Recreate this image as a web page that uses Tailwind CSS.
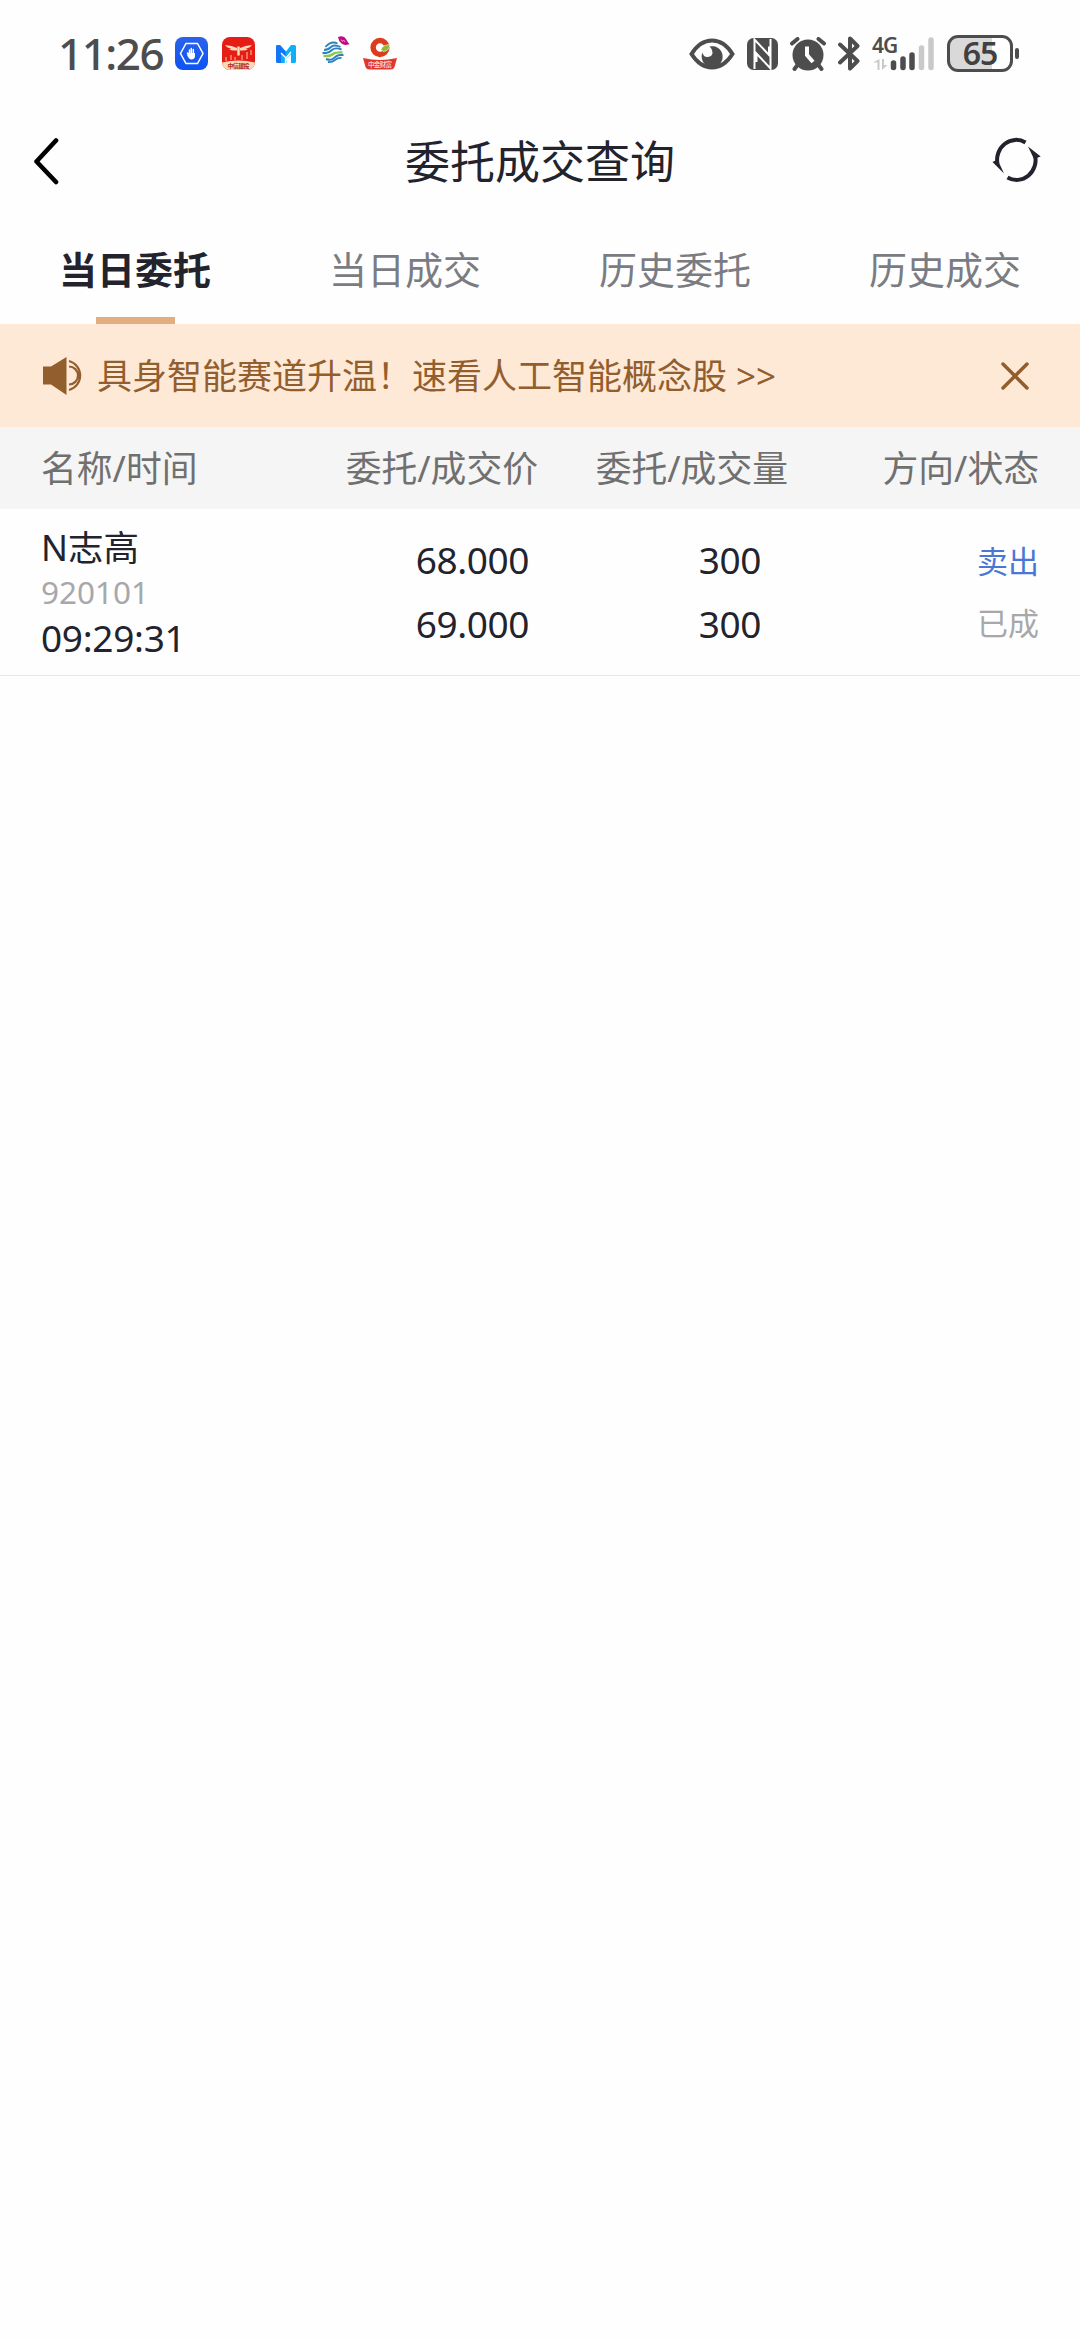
<!DOCTYPE html>
<html lang="zh-CN">
<head>
<meta charset="utf-8">
<title>委托成交查询</title>
<script src="https://cdn.jsdelivr.net/npm/@tailwindcss/browser@4"></script>
</head>
<body class="w-[1080px] h-[2340px] overflow-hidden bg-[#fefefe] font-['Noto_Sans','Noto_Sans_CJK_SC',sans-serif] text-[#22232d]">
  <!-- status bar -->
  <div class="h-[108px] flex items-start pl-[58px] pt-[35px] text-[#4d4d4d]">
    <div class="w-[117px] h-[36px] leading-[37px] text-[44px] font-medium tracking-[-1.5px] whitespace-nowrap">11:26</div>
    <svg class="w-[33px] h-[33px] mt-[2px]" viewBox="0 0 33 33">
      <defs><linearGradient id="b" x1="0" y1="0" x2="0" y2="1"><stop offset="0" stop-color="#2a62ea"/><stop offset="1" stop-color="#0d54f4"/></linearGradient></defs>
      <rect width="33" height="33" rx="8" fill="url(#b)"/>
      <path d="M11 6.500h11.500l5.500 10-5.500 10H11l-5.500-10z" fill="none" stroke="#fff" stroke-width="1.500"/>
      <path d="M12.500 16l2 2.500V13M16.300 16v-4.500M18.300 16v-3.500" stroke="#fff" stroke-width="1.500" stroke-linecap="round" fill="none"/>
      <path d="M13.500 16h6.500v4q-1 2.500-3.500 2.500T12 18z" fill="#fff"/>
    </svg>
    <svg class="w-[33px] h-[33px] mt-[2px] ml-[14px]" viewBox="0 0 33 33">
      <defs><clipPath id="rc"><rect width="33" height="33" rx="8"/></clipPath></defs>
      <g clip-path="url(#rc)"><rect width="33" height="33" fill="#e61c17"/>
      <path d="M0 25.500Q16 21.500 33 25.500V33H0z" fill="#fbd9b2"/>
      <path d="M4 20v4M9 18v5M13 20v3M20 18v5M25 15v7M29 13v5" stroke="#f1745a" stroke-width="2"/>
      <path d="M3 8q7 .5 12 3v2.500q-6 .5-8-1.500l2.500-.5Q5 11 3 8zM30 8q-7 .5-12 3v2.500q6 .5 8-1.500l-2.500-.5Q28 11 30 8z" fill="#fbdcb8"/>
      <path d="M16.500 9.500v9" stroke="#fbdcb8" stroke-width="2.500"/></g>
      <text x="16.500" y="31" font-size="6" font-weight="700" text-anchor="middle" textLength="22" fill="#b0271d" font-family="Noto Sans CJK SC">中信建投</text>
    </svg>
    <svg class="w-[20px] h-[18px] mt-[10px] ml-[21px]" viewBox="0 0 20 18">
      <path d="M0 1.500Q0 0 1.500 0H4l6 6.500L15 0h3.500Q20 0 20 1.500v15Q20 18 18.500 18H15V9l-5 5 .5 4H5V9z" fill="#0bb1f8"/>
      <path d="M0 1.500Q0 0 1.500 0H4l6 7-1 4-4-3v10H1.500Q0 18 0 16.500z" fill="#1476f5"/>
      <path d="M5 8l5 5 5-6M9.500 12v6" stroke="#fff" stroke-width="1.300" fill="none"/>
    </svg>
    <svg class="w-[28px] h-[29px] mt-[1px] ml-[26px]" viewBox="0 0 28 29" fill="none" stroke-width="1.900">
      <path d="M2 14Q6 14 9 11T18.500 11M3.500 11Q9 4.500 15.500 7.500" stroke="#2b83bd"/>
      <path d="M.5 17H4Q7 17 10 14T19.500 13.500M21.500 19H18Q15 19 12 22T4 23" stroke="#2b83bd"/>
      <path d="M1.500 20H5.500Q8.500 20 11 18T20.500 16.500" stroke="#8fc64a" stroke-width="2.400"/>
      <path d="M6 26Q10 26.500 13 24T19.500 22" stroke="#2b83bd"/>
      <path d="M16 1q6-2 8 2t3.500 5q-5 2-8-.5T16 1z" fill="#c20b80"/>
      <path d="M19 3.500l1.500 2 1-1.500 1.500 2" stroke="#f3b9dc" stroke-width=".8"/>
    </svg>
    <svg class="w-[34px] h-[33px] mt-[2px] ml-[13px]" viewBox="0 0 34 33">
      <circle cx="17" cy="10.500" r="6.900" fill="none" stroke="#dc3c1c" stroke-width="5.500"/>
      <path d="M18 12.500q1-4.500 9-5-1 7-7 7z" fill="#8dbb30" stroke="#fff" stroke-width=".6"/>
      <path d="M0 21q17 4 34 0l-2.500 9q-.8 2.500-4 2.500H6.500q-3 0-4-2.500z" fill="#e2382a"/>
      <text x="17" y="30" font-size="6.500" text-anchor="middle" textLength="24" fill="#fff" font-family="Noto Sans CJK SC">中金财富</text>
    </svg>
    <svg class="w-[46px] h-[32px] mt-[3px] ml-[292px]" viewBox="0 0 46 32">
      <path d="M2.500 16Q11 2.500 23 2.500T43.500 16Q35 29.500 23 29.500T2.500 16z" fill="none" stroke="#4d4d4d" stroke-width="4"/>
      <path d="M20.500 8.500a10.500 10.500 0 1 1-7 6q1 5 5.500 4.500 6-1 4-7-1-2.500-2.500-3.500z" fill="#4d4d4d"/>
    </svg>
    <svg class="w-[31px] h-[32px] mt-[3px] ml-[12px]" viewBox="0 0 31 32">
      <rect width="31" height="32" rx="6.500" fill="#4d4d4d"/>
      <path d="M7.500 31V1.500L22 17V8.500M23.500 1v29.500L9.500 15.500V24" fill="none" stroke="#fff" stroke-width="2"/>
    </svg>
    <svg class="w-[36px] h-[35px] mt-[2px] ml-[12px]" viewBox="0 0 36 35">
      <circle cx="18" cy="18" r="15.500" fill="#4d4d4d"/>
      <path d="M2 6.500L7.500 2M34 6.500L28.500 2M7.500 28L4.500 32M28.500 28l3 4" stroke="#4d4d4d" stroke-width="4" stroke-linecap="round"/>
      <path d="M17 9.500V18l6 7" fill="none" stroke="#fff" stroke-width="4"/>
    </svg>
    <svg class="w-[22px] h-[35px] mt-[1px] ml-[12px]" viewBox="0 0 22 35">
      <path d="M2 8.500l17.500 16.500L12 32.500V2.500l7.500 7.500L2 26.500" fill="none" stroke="#4d4d4d" stroke-width="4" stroke-linecap="round" stroke-linejoin="round"/>
    </svg>
    <div class="w-[62px] h-[36px] ml-[12px] relative">
      <svg class="w-[62px] h-[36px]" viewBox="0 0 62 36">
        <path d="M5.500 35v-7.500H1L7.500 24v11zM10 24v11l5.500-5H12v-6z" fill="#c9c9c9"/>
        <path d="M21.500 28v4.500M31 24v8.500M40 20v12.500" stroke="#4d4d4d" stroke-width="5.500" stroke-linecap="round"/>
        <path d="M49.500 13v19.500M59 5v27.500" stroke="#c9c9c9" stroke-width="5.500" stroke-linecap="round"/>
      </svg>
      <div class="absolute left-0 top-0 text-[21px] leading-[20px] font-semibold tracking-[-1px]">4G</div>
    </div>
    <div class="ml-[13px] w-[66px] h-[37px] rounded-[11px] border-[3px] border-[#4d4d4d] bg-linear-to-r from-[#d9d9d9] from-70% to-white to-70% text-center text-[32px] leading-[30px] font-semibold text-[#404040]"><span class="tracking-[-1px]">65</span></div>
    <div class="ml-[2px] mt-[13px] w-[4px] h-[11px] rounded-[2px] bg-[#4d4d4d]"></div>
  </div>

  <!-- title bar -->
  <div class="h-[108px] flex items-center justify-between px-[39px]">
    <svg class="w-[50px] h-[48px] -mt-[2px] -ml-[6px] mr-[6px]" viewBox="0 0 50 48"><path d="M23 3.500L3.500 24.500 23 45" fill="none" stroke="#000" stroke-width="4.600" stroke-linecap="round" stroke-linejoin="round"/></svg>
    <h1 class="text-[45px] leading-[60px]">委托成交查询</h1>
    <svg class="w-[50px] h-[48px] -mt-[2px]" viewBox="0 0 50 48">
      <path d="M34.500 5.500A19 20 0 0 0 6.500 27M16.500 40.500A19 20 0 0 0 44 18" fill="none" stroke="#22232d" stroke-width="4"/>
      <path d="M1.500 25l5-2.500 6.500 14zM49.700 19.500L43 22 37 9.500z" fill="#22232d"/>
    </svg>
  </div>

  <!-- tabs -->
  <div class="h-[108px] grid grid-cols-4 text-center text-[38px] leading-[107px] text-[#7b7c82]">
    <div class="flex flex-col items-center text-[#22232d]"><span class="h-[101px] font-bold">当日委托</span><span class="w-[79px] h-[7px] bg-[#e2ae80]"></span></div>
    <div>当日成交</div>
    <div>历史委托</div>
    <div>历史成交</div>
  </div>

  <!-- notice -->
  <div class="h-[103px] bg-[#fee9d7] flex items-center pl-[43px] pr-[51px] text-[35px] text-[#935e2e]">
    <svg class="w-[40px] h-[40px]" viewBox="0 0 40 40">
      <path d="M0 10.500h8L23.500 1v38L8 28.500H0z" fill="#935e2e"/>
      <path d="M26 5a15 15 0 0 1 0 29M26 10.500a9 9 0 0 1 0 18" fill="none" stroke="#935e2e" stroke-width="2.200"/>
    </svg>
    <span class="flex-1 ml-[14px] pt-[1px]">具身智能赛道升温！速看人工智能概念股 &gt;&gt;</span>
    <svg class="w-[28px] h-[28px]" viewBox="0 0 28 28"><path d="M2 2l24 24M26 2L2 26" stroke="#935e2e" stroke-width="3.500" stroke-linecap="round"/></svg>
  </div>

  <!-- table head -->
  <div class="h-[82px] bg-[#f5f5f5] grid grid-cols-[265px_232px_250px_251px] pl-[41px] text-[35.800px] leading-[82px] text-[#707070] whitespace-nowrap">
    <div>名称/时间</div>
    <div class="text-right">委托/成交价</div>
    <div class="text-right">委托/成交量</div>
    <div class="text-right">方向/状态</div>
  </div>

  <!-- order row -->
  <div class="h-[167px] border-b border-[#e8e8e8] grid grid-cols-[304px_184px_232px_278px] pl-[41px] text-[37px]">
    <div class="pt-[14px]">
      <div class="text-[35.500px] leading-[48px]">N志高</div>
      <div class="text-[31.500px] leading-[41px] text-[#a8a8aa]">920101</div>
      <div class="leading-[51px] tracking-[-0.300px]">09:29:31</div>
    </div>
    <div class="pt-[19px] text-right leading-[64px] tracking-[-0.400px]"><div>68.000</div><div>69.000</div></div>
    <div class="pt-[19px] text-right leading-[64px] tracking-[-0.400px]"><div>300</div><div>300</div></div>
    <div class="pt-[21px] text-right text-[31px] leading-[62px]"><div class="text-[#4a77d6]">卖出</div><div class="text-[#a8a8aa]">已成</div></div>
  </div>
</body>
</html>
